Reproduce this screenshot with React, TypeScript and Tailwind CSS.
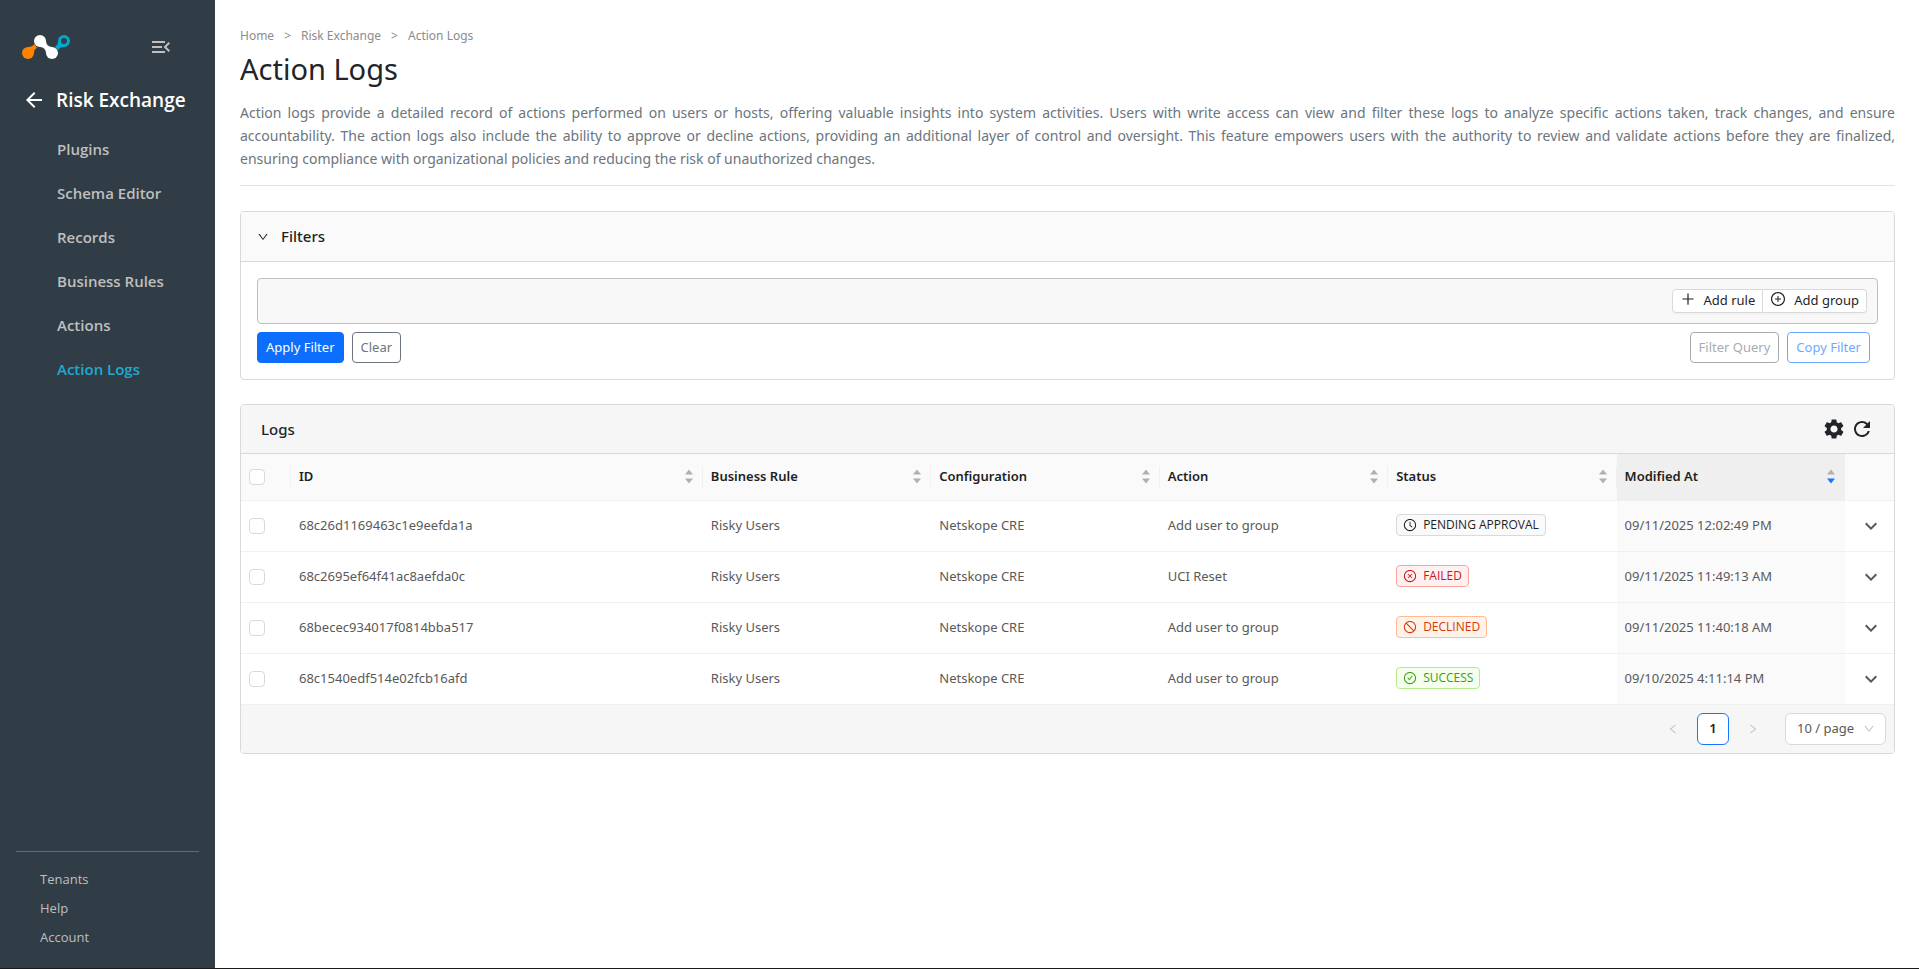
import React from 'react';
import { IconType } from 'react-icons';
import {
  AiOutlineCheckCircle,
  AiOutlineClockCircle,
  AiOutlineCloseCircle,
  AiOutlineDown,
  AiOutlineLeft,
  AiOutlinePlus,
  AiOutlinePlusCircle,
  AiOutlineRight,
  AiOutlineStop,
} from 'react-icons/ai';
import { MdArrowBack, MdExpandMore, MdMenuOpen, MdRefresh, MdSettings } from 'react-icons/md';

type Status = 'PENDING APPROVAL' | 'FAILED' | 'DECLINED' | 'SUCCESS';

interface LogEntry {
  id: string;
  rule: string;
  configuration: string;
  action: string;
  status: Status;
  modifiedAt: string;
}

interface StatusTagProps {
  status: Status;
}

interface SortArrowsProps {
  descending?: boolean;
}

const menuItems = ['Plugins', 'Schema Editor', 'Records', 'Business Rules', 'Actions', 'Action Logs'];
const footerItems = ['Tenants', 'Help', 'Account'];
const columns = ['Business Rule', 'Configuration', 'Action', 'Status'];

const logs: LogEntry[] = [
  {
    id: '68c26d1169463c1e9eefda1a',
    rule: 'Risky Users',
    configuration: 'Netskope CRE',
    action: 'Add user to group',
    status: 'PENDING APPROVAL',
    modifiedAt: '09/11/2025 12:02:49 PM',
  },
  {
    id: '68c2695ef64f41ac8aefda0c',
    rule: 'Risky Users',
    configuration: 'Netskope CRE',
    action: 'UCI Reset',
    status: 'FAILED',
    modifiedAt: '09/11/2025 11:49:13 AM',
  },
  {
    id: '68becec934017f0814bba517',
    rule: 'Risky Users',
    configuration: 'Netskope CRE',
    action: 'Add user to group',
    status: 'DECLINED',
    modifiedAt: '09/11/2025 11:40:18 AM',
  },
  {
    id: '68c1540edf514e02fcb16afd',
    rule: 'Risky Users',
    configuration: 'Netskope CRE',
    action: 'Add user to group',
    status: 'SUCCESS',
    modifiedAt: '09/10/2025 4:11:14 PM',
  },
];

const statusStyles: Record<Status, { icon: IconType; className: string }> = {
  'PENDING APPROVAL': {
    icon: AiOutlineClockCircle,
    className: 'border-[#d9d9d9] bg-[#fafafa] text-[#1f1f1f]',
  },
  FAILED: {
    icon: AiOutlineCloseCircle,
    className: 'border-[#ffa39e] bg-[#fff1f0] text-[#cf1322]',
  },
  DECLINED: {
    icon: AiOutlineStop,
    className: 'border-[#ffbb96] bg-[#fff2e8] text-[#d4380d]',
  },
  SUCCESS: {
    icon: AiOutlineCheckCircle,
    className: 'border-[#b7eb8f] bg-[#f6ffed] text-[#389e0d]',
  },
};

const Logo: React.FC = () => (
  <svg className="h-6 w-12" viewBox="0 0 48 24" aria-hidden="true">
    <g fill="#ff8300">
      <circle cx="6" cy="18" r="6" />
      <path d="M6 12C9 12 11 11 12.6 8.8C13.2 10.6 14 11.8 15.2 12.8C13 14 12 15.5 12 18Z" />
    </g>
    <g fill="#ffffff">
      <circle cx="18" cy="6" r="6" />
      <circle cx="30" cy="18" r="6" />
      <path d="M24 6C24.2 9.8 26.2 11.8 30 12L24 18C23.8 14.2 21.8 12.2 18 12Z" />
    </g>
    <circle cx="42" cy="6" r="4.5" fill="none" stroke="#00a9ce" strokeWidth="3" />
    <path d="M36 6C36 9 35 10.5 32.8 11.8C34.2 12.6 35.2 13.8 35.8 15.4C37.5 13 39 12 42 12Z" fill="#00a9ce" />
  </svg>
);

const SortArrows: React.FC<SortArrowsProps> = ({ descending = false }) => (
  <svg className="h-4 w-2 shrink-0" viewBox="0 0 8 16" aria-hidden="true">
    <path d="M4 0.5L8 5.6H0Z" fill="#b0b0b0" />
    <path d="M4 14.5L0 9.4H8Z" fill={descending ? '#1677ff' : '#b0b0b0'} />
  </svg>
);

const StatusTag: React.FC<StatusTagProps> = ({ status }) => {
  const { icon: Icon, className } = statusStyles[status];

  return (
    <span
      className={`inline-flex h-[22px] items-center gap-[6px] rounded border px-[6px] font-['Open_Sans',sans-serif] text-xs ${className}`}
    >
      <Icon className="h-[14px] w-[14px]" />
      {status}
    </span>
  );
};

const Checkbox: React.FC<{ label: string }> = ({ label }) => (
  <input
    type="checkbox"
    aria-label={label}
    className="block h-4 w-4 appearance-none rounded border border-[#d9d9d9] bg-white"
  />
);

const Sidebar: React.FC = () => (
  <aside className="flex w-[215px] shrink-0 flex-col bg-[#303d46] font-['Open_Sans',sans-serif] text-[#bfbfbf]">
    <div className="mt-[35px] flex items-center justify-between pr-[42px] pl-[22px]">
      <Logo />
      <button type="button" aria-label="Collapse menu">
        <MdMenuOpen className="h-6 w-6" />
      </button>
    </div>
    <div className="mt-[29px] flex h-6 items-center gap-[10px] pl-[22px] text-white">
      <button type="button" aria-label="Back">
        <MdArrowBack className="h-6 w-6" />
      </button>
      <span className="text-[19px] font-semibold whitespace-nowrap">Risk Exchange</span>
    </div>
    <nav className="mt-[15px] flex flex-col">
      {menuItems.map((item) => (
        <a
          key={item}
          href="#"
          className={`flex h-11 items-center pl-[57px] text-[15px] font-semibold ${
            item === 'Action Logs' ? 'text-[#1fa9cf]' : ''
          }`}
        >
          {item}
        </a>
      ))}
    </nav>
    <div className="mx-4 mt-auto mb-4 border-t border-[#5f6a71] pt-[13px]">
      {footerItems.map((item) => (
        <a key={item} href="#" className="flex h-[29px] items-center pl-6 text-[13px]">
          {item}
        </a>
      ))}
    </div>
  </aside>
);

const FiltersCard: React.FC = () => (
  <section className="mt-[25px] overflow-hidden rounded border border-[#d9d9d9]">
    <button
      type="button"
      className="flex h-[50px] w-full items-center gap-3 border-b border-[#d9d9d9] bg-[#fafafa] px-4 text-[15px] font-medium text-[#1f1f1f]"
    >
      <AiOutlineDown className="h-3 w-3" />
      Filters
    </button>
    <div className="p-4">
      <div className="flex h-[46px] items-center justify-end rounded border border-[#bfbfbf] bg-[#f8f8f8] px-[10px] text-[13px] text-[#1f1f1f]">
        <button
          type="button"
          className="flex h-6 items-center gap-2 rounded-l border border-[#d9d9d9] bg-white px-[7px] shadow-[0_2px_0_rgba(0,0,0,0.02)]"
        >
          <AiOutlinePlus className="mb-1 h-4 w-4" />
          Add rule
        </button>
        <button
          type="button"
          className="flex h-6 items-center gap-2 rounded-r border border-l-0 border-[#d9d9d9] bg-white px-[7px] shadow-[0_2px_0_rgba(0,0,0,0.02)]"
        >
          <AiOutlinePlusCircle className="mb-1 h-4 w-4" />
          Add group
        </button>
      </div>
      <div className="mt-2 flex h-[31px] gap-2 pr-2 text-[13px]">
        <button type="button" className="rounded border border-[#0d6efd] bg-[#0d6efd] px-2 text-white">
          Apply Filter
        </button>
        <button type="button" className="rounded border border-[#6c757d] px-2 text-[#6c757d]">
          Clear
        </button>
        <button type="button" className="ml-auto rounded border border-[#a7acb1] px-2 text-[#a7acb1]">
          Filter Query
        </button>
        <button type="button" className="rounded border border-[#6ea8fe] px-2 text-[#6ea8fe]">
          Copy Filter
        </button>
      </div>
    </div>
  </section>
);

const LogsTable: React.FC = () => (
  <table className="w-full table-fixed border-separate border-spacing-0 text-left text-[13px]">
    <thead className="bg-[#fafafa] text-[#1f1f1f]">
      <tr className="h-[47px]">
        <th className="w-[50px] border-b border-[#f0f0f0] p-0">
          <div className="flex h-[22px] items-center border-r border-[#f0f0f0] pl-2">
            <Checkbox label="Select all logs" />
          </div>
        </th>
        <th className="border-b border-[#f0f0f0] p-0 font-semibold">
          <div className="flex h-[22px] items-center justify-between border-r border-[#f0f0f0] pr-[9px] pl-2">
            ID
            <SortArrows />
          </div>
        </th>
        {columns.map((column) => (
          <th key={column} className="w-[13.82%] border-b border-[#f0f0f0] p-0 font-semibold">
            <div className="flex h-[22px] items-center justify-between border-r border-[#f0f0f0] pr-[9px] pl-2">
              {column}
              <SortArrows />
            </div>
          </th>
        ))}
        <th className="w-[13.82%] border-b border-[#f0f0f0] bg-[#efefef] p-0 font-semibold">
          <div className="flex h-[22px] items-center justify-between pr-[10px] pl-2">
            Modified At
            <SortArrows descending />
          </div>
        </th>
        <th className="w-[49px] border-b border-[#f0f0f0]" aria-label="Expand" />
      </tr>
    </thead>
    <tbody className="text-[#595959]">
      {logs.map((log) => (
        <tr key={log.id} className="h-[51px]">
          <td className="border-b border-[#f0f0f0] p-0 pl-2">
            <Checkbox label={`Select ${log.id}`} />
          </td>
          <td className="border-b border-[#f0f0f0] p-0 pl-2">{log.id}</td>
          <td className="border-b border-[#f0f0f0] p-0 pl-2">{log.rule}</td>
          <td className="border-b border-[#f0f0f0] p-0 pl-2">{log.configuration}</td>
          <td className="border-b border-[#f0f0f0] p-0 pl-2">{log.action}</td>
          <td className="border-b border-[#f0f0f0] p-0 pl-2">
            <StatusTag status={log.status} />
          </td>
          <td className="border-b border-[#f0f0f0] bg-[#fafafa] p-0 pl-2">{log.modifiedAt}</td>
          <td className="border-b border-[#f0f0f0] p-0 pl-[14px]">
            <button type="button" aria-label={`Expand ${log.id}`} className="block">
              <MdExpandMore className="h-6 w-6" />
            </button>
          </td>
        </tr>
      ))}
    </tbody>
  </table>
);

const Pagination: React.FC = () => (
  <div className="flex items-center justify-end gap-2 bg-[#f6f6f6] p-2 text-[13px]">
    <button type="button" aria-label="Previous page" className="flex h-8 w-8 items-center justify-center text-[#bfbfbf]">
      <AiOutlineLeft className="h-3 w-3" />
    </button>
    <button
      type="button"
      className="h-8 w-8 rounded-md border border-[#1677ff] bg-white font-semibold text-[#1f1f1f]"
    >
      1
    </button>
    <button type="button" aria-label="Next page" className="flex h-8 w-8 items-center justify-center text-[#bfbfbf]">
      <AiOutlineRight className="h-3 w-3" />
    </button>
    <div className="relative ml-2">
      <select
        aria-label="Page size"
        className="h-8 w-[101px] appearance-none rounded-md border border-[#d9d9d9] bg-white pl-[11px] text-[#595959]"
      >
        <option>10 / page</option>
        <option>20 / page</option>
        <option>50 / page</option>
      </select>
      <AiOutlineDown className="pointer-events-none absolute top-[10px] right-[11px] h-3 w-3 text-[#bfbfbf]" />
    </div>
  </div>
);

const LogsCard: React.FC = () => (
  <section className="mt-6 overflow-hidden rounded border border-[#d9d9d9]">
    <div className="flex h-[49px] items-center justify-between border-b border-[#d9d9d9] bg-[#f6f6f6] px-5 text-[#212529]">
      <h2 className="text-[15px] font-medium">Logs</h2>
      <div className="flex gap-1">
        <button type="button" aria-label="Settings">
          <MdSettings className="h-6 w-6" />
        </button>
        <button type="button" aria-label="Refresh">
          <MdRefresh className="h-6 w-6" />
        </button>
      </div>
    </div>
    <LogsTable />
    <Pagination />
  </section>
);

const App: React.FC = () => {
  return (
    <div className="flex min-h-screen border-b border-[#1a1a1a] bg-white font-['Noto_Sans',sans-serif]">
      <Sidebar />
      <main className="min-w-0 flex-1 pt-[25px] pr-6 pl-[25px]">
        <nav aria-label="Breadcrumb" className="flex h-[22px] items-center gap-[10px] text-xs text-[#8c8c8c]">
          <a href="#">Home</a>
          <span>&gt;</span>
          <a href="#">Risk Exchange</a>
          <span>&gt;</span>
          <a href="#">Action Logs</a>
        </nav>
        <h1 className="mt-1 text-[29px] leading-9 text-[#212529]">Action Logs</h1>
        <p className="mt-[14px] border-b border-[#e3e3e3] pb-[15px] text-justify text-sm leading-[23px] text-[#6c757d]">
          Action logs provide a detailed record of actions performed on users or hosts, offering valuable insights into
          system activities. Users with write access can view and filter these logs to analyze specific actions taken,
          track changes, and ensure accountability. The action logs also include the ability to approve or decline
          actions, providing an additional layer of control and oversight. This feature empowers users with the
          authority to review and validate actions before they are finalized, ensuring&nbsp;compliance with
          organizational policies and reducing the risk of unauthorized changes.
        </p>
        <FiltersCard />
        <LogsCard />
      </main>
    </div>
  );
};

export default App;
